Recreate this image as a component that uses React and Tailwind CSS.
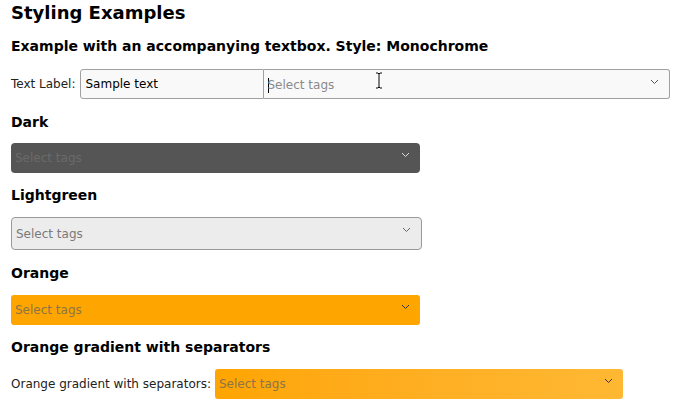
const FONT = "font-['DejaVu_Sans',sans-serif]"

function Chevron({ color }) {
  return (
    <svg width="9" height="6" viewBox="0 0 9 6" className="shrink-0">
      <path d="M1 1 L4.5 4.5 L8 1" fill="none" stroke={color} strokeWidth="1" />
    </svg>
  )
}

function TagSelect({ className, textColor, chevron, caret }) {
  return (
    <div className={'flex items-start justify-between h-[30px] pl-[4px] pr-[10px] ' + className}>
      <div className="flex items-center h-full">
        {caret && <span className="w-px h-[15px] bg-black mr-[-1px]" />}
        <span className={'text-[12px] ' + textColor}>Select tags</span>
      </div>
      <div className="pt-[9px]">
        <Chevron color={chevron} />
      </div>
    </div>
  )
}

function Heading({ children }) {
  return <h3 className="text-[14px] font-bold leading-[18px] text-black">{children}</h3>
}

export default function App() {
  return (
    <div className={'relative w-[680px] h-[409px] bg-white px-[11px] pt-[1px] overflow-hidden ' + FONT}>
      <h1 className="text-[18px] font-bold leading-[24px] text-black">Styling Examples</h1>

      <div className="mt-[12px]">
        <Heading>Example with an accompanying textbox. Style: Monochrome</Heading>
      </div>
      <div className="mt-[14px] flex items-center h-[30px]">
        <span className="text-[12px] text-[#222] mr-[4px]">Text Label:</span>
        <div className="flex h-[30px] flex-1 mr-[-1px]">
          <div className="w-[184px] h-full bg-[#f9f9f9] border border-[#a0a0a0] rounded-l-[3px] flex items-center pl-[5px] text-[12px] text-black">
            Sample text
          </div>
          <div className="flex-1 border border-l-0 border-[#a0a0a0] rounded-r-[3px] bg-[#f9f9f9]">
            <TagSelect className="h-[28px] pl-[2px]" textColor="text-[#8a8a8a]" chevron="#555" caret />
          </div>
        </div>
      </div>

      <div className="mt-[14px]">
        <Heading>Dark</Heading>
      </div>
      <div className="mt-[12px] w-[409px]">
        <TagSelect className="bg-[#555555] rounded-[4px]" textColor="text-[#6a6a6a]" chevron="#dddddd" />
      </div>

      <div className="mt-[13px]">
        <Heading>Lightgreen</Heading>
      </div>
      <div className="mt-[13px] w-[411px]">
        <TagSelect className="h-[33px] bg-[#ececec] border border-[#999] rounded-[4px]" textColor="text-[#7a7a7a]" chevron="#666" />
      </div>

      <div className="mt-[14px]">
        <Heading>Orange</Heading>
      </div>
      <div className="mt-[13px] w-[409px]">
        <TagSelect className="bg-[#ffa500] rounded-[3px]" textColor="text-[#8d7448]" chevron="#333" />
      </div>

      <div className="mt-[13px]">
        <Heading>Orange gradient with separators</Heading>
      </div>
      <div className="mt-[13px] flex items-center">
        <span className="text-[12px] text-[#222] mr-[4px]">Orange gradient with separators:</span>
        <div className="w-[408px]">
          <TagSelect className="bg-gradient-to-r from-[#ffa500] to-[#ffb833] rounded-[3px]" textColor="text-[#8d7448]" chevron="#333" />
        </div>
      </div>

      {/* mouse pointer */}
      <svg className="absolute left-[375px] top-[72px]" width="8" height="17" viewBox="0 0 8 17">
        <path d="M1 1 H3 L4 2 L5 1 H7 M4 2 V15 M1 16 H3 L4 15 L5 16 H7" fill="none" stroke="#fff" strokeWidth="2.5" />
        <path d="M1 1 H3 L4 2 L5 1 H7 M4 2 V15 M1 16 H3 L4 15 L5 16 H7" fill="none" stroke="#000" strokeWidth="1" />
      </svg>
    </div>
  )
}
